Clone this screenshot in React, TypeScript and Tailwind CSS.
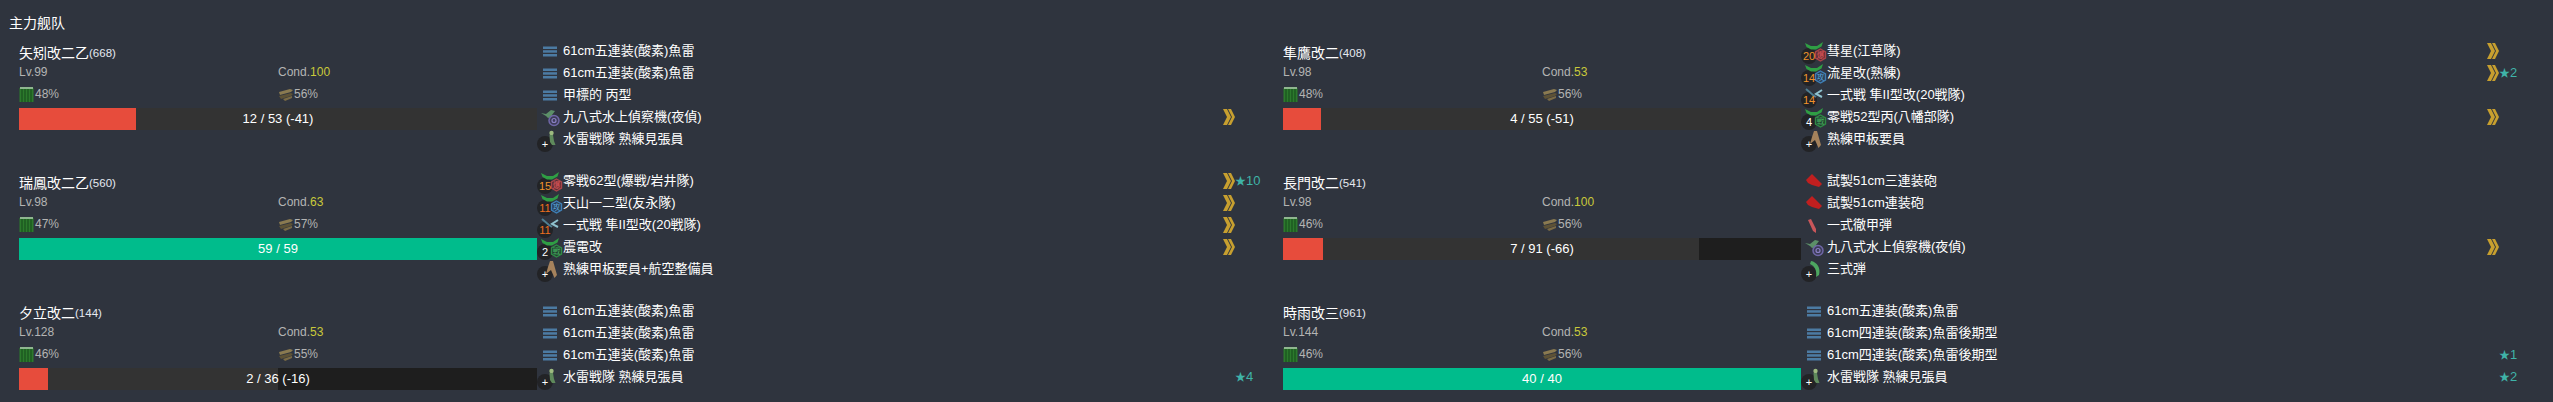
type Badge = 'red' | 'blue' | 'green';
type IconKind = 'torpedo' | 'seaplane' | 'lookout' | 'fighter' | 'jet' | 'crew' | 'gun' | 'shell' | 'sanshiki';

interface Equip {
  name: string;
  icon: IconKind;
  badge?: Badge;
  count?: string;
  chevron?: boolean;
  star?: number;
}

interface Ship {
  name: string;
  id: number;
  lv: number;
  cond: number;
  fuel: number;
  ammo: number;
  hp: number;
  maxHp: number;
  damage?: number;
  equips: Equip[];
}

const torpedo = (name: string, star?: number): Equip => ({ name, icon: 'torpedo', star });
const lookout: Equip = { name: '水雷戦隊 熟練見張員', icon: 'lookout', count: '+' };
const nightPlane: Equip = { name: '九八式水上偵察機(夜偵)', icon: 'seaplane', chevron: true };

const left: Ship[] = [
  {
    name: '矢矧改二乙',
    id: 668,
    lv: 99,
    cond: 100,
    fuel: 48,
    ammo: 56,
    hp: 12,
    maxHp: 53,
    damage: 41,
    equips: [torpedo('61cm五連装(酸素)魚雷'), torpedo('61cm五連装(酸素)魚雷'), torpedo('甲標的 丙型'), nightPlane, lookout],
  },
  {
    name: '瑞鳳改二乙',
    id: 560,
    lv: 98,
    cond: 63,
    fuel: 47,
    ammo: 57,
    hp: 59,
    maxHp: 59,
    equips: [
      { name: '零戦62型(爆戦/岩井隊)', icon: 'fighter', badge: 'red', count: '15', chevron: true, star: 10 },
      { name: '天山一二型(友永隊)', icon: 'fighter', badge: 'blue', count: '11', chevron: true },
      { name: '一式戦 隼II型改(20戦隊)', icon: 'jet', count: '11', chevron: true },
      { name: '震電改', icon: 'fighter', badge: 'green', count: '2', chevron: true },
      { name: '熟練甲板要員+航空整備員', icon: 'crew', count: '+' },
    ],
  },
  {
    name: '夕立改二',
    id: 144,
    lv: 128,
    cond: 53,
    fuel: 46,
    ammo: 55,
    hp: 2,
    maxHp: 36,
    damage: 16,
    equips: [
      torpedo('61cm五連装(酸素)魚雷'),
      torpedo('61cm五連装(酸素)魚雷'),
      torpedo('61cm五連装(酸素)魚雷'),
      { ...lookout, star: 4 },
    ],
  },
];

const right: Ship[] = [
  {
    name: '隼鷹改二',
    id: 408,
    lv: 98,
    cond: 53,
    fuel: 48,
    ammo: 56,
    hp: 4,
    maxHp: 55,
    damage: 51,
    equips: [
      { name: '彗星(江草隊)', icon: 'fighter', badge: 'red', count: '20', chevron: true },
      { name: '流星改(熟練)', icon: 'fighter', badge: 'blue', count: '14', chevron: true, star: 2 },
      { name: '一式戦 隼II型改(20戦隊)', icon: 'jet', count: '14' },
      { name: '零戦52型丙(八幡部隊)', icon: 'fighter', badge: 'green', count: '4', chevron: true },
      { name: '熟練甲板要員', icon: 'crew', count: '+' },
    ],
  },
  {
    name: '長門改二',
    id: 541,
    lv: 98,
    cond: 100,
    fuel: 46,
    ammo: 56,
    hp: 7,
    maxHp: 91,
    damage: 66,
    equips: [
      { name: '試製51cm三連装砲', icon: 'gun' },
      { name: '試製51cm連装砲', icon: 'gun' },
      { name: '一式徹甲弾', icon: 'shell' },
      nightPlane,
      { name: '三式弾', icon: 'sanshiki', count: '+' },
    ],
  },
  {
    name: '時雨改三',
    id: 961,
    lv: 144,
    cond: 53,
    fuel: 46,
    ammo: 56,
    hp: 40,
    maxHp: 40,
    equips: [
      torpedo('61cm五連装(酸素)魚雷'),
      torpedo('61cm四連装(酸素)魚雷後期型'),
      torpedo('61cm四連装(酸素)魚雷後期型', 1),
      { ...lookout, star: 2 },
    ],
  },
];

const badgeStyle: Record<Badge, { stroke: string; fill: string; text: string; label: string }> = {
  red: { stroke: '#a8444a', fill: '#5a2d34', text: '#e0575a', label: '爆' },
  blue: { stroke: '#3f7fb5', fill: '#2b4058', text: '#5aa5dc', label: '攻' },
  green: { stroke: '#2f8a45', fill: '#234030', text: '#46b060', label: '戦' },
};

const Hex = ({ badge }: { badge: Badge }) => {
  const s = badgeStyle[badge];
  return (
    <g transform="translate(14 9)">
      <path d="M5.5 0 L10.5 2.8 L10.5 9.2 L5.5 12 L0.5 9.2 L0.5 2.8 Z" fill={s.fill} stroke={s.stroke} strokeWidth="1.4" />
      <text x="5.5" y="9" textAnchor="middle" fontSize="7.5" fill={s.text} fontFamily="'Noto Sans CJK JP', sans-serif">
        {s.label}
      </text>
    </g>
  );
};

const EquipIcon = ({ kind, badge }: { kind: IconKind; badge?: Badge }) => {
  return (
    <svg width="26" height="26" viewBox="0 0 26 26" className="absolute top-0 left-0">
      {kind === 'torpedo' && (
        <g fill="#4c7ba3">
          <rect x="6" y="6.5" width="14" height="2.5" />
          <rect x="6" y="10.2" width="14" height="2.5" />
          <rect x="6" y="14" width="14" height="2.5" />
        </g>
      )}
      {kind === 'seaplane' && (
        <>
          <path d="M4 7 L9 8 L14 4 L18 5 L15 9 L16 11 L11 12 L9 10 Z" fill="#5c8f68" />
          <circle cx="17" cy="14.5" r="5" fill="#3d3c58" stroke="#6f66a6" strokeWidth="1.5" />
          <circle cx="17" cy="14.5" r="2" fill="none" stroke="#8a80c4" strokeWidth="1.2" />
        </>
      )}
      {kind === 'fighter' && (
        <>
          <path d="M4 3 L10 6 L16 6 L22 2 L20.5 6.5 L15 9.5 L10 9.5 L5.5 7 Z" fill="#2f9e44" />
          {badge && <Hex badge={badge} />}
        </>
      )}
      {kind === 'jet' && (
        <g fill="none" strokeWidth="2">
          <path d="M5 5 L12 11 L15 13" stroke="#4f7f92" />
          <path d="M21 6 L15 10 L21 13" stroke="#8fc2cf" />
        </g>
      )}
      {kind === 'lookout' && (
        <>
          <circle cx="14.5" cy="5" r="2.2" fill="#9dbb80" />
          <path d="M12.5 7 L16 7 L17 13 L18.5 17 L15 17 L13 14 Z" fill="#5f8a5c" />
        </>
      )}
      {kind === 'crew' && <path d="M13 3 L16 3 L20 17 L17.5 20 L14 12 L9 16 L11 9 Z" fill="#a5825c" />}
      {kind === 'gun' && <path d="M5 10 L11 4 L14 7 L21 14 L18 17 L11 15 L7 13 Z" fill="#c01f1f" />}
      {kind === 'shell' && <path d="M7 6 L10 5 L15 15 L15 19 L12 17 Z" fill="#c9565a" />}
      {kind === 'sanshiki' && <path d="M10 3 C16 4 20 10 18 17 L15 19 C16 13 14 8 9 6 Z" fill="#4da760" />}
    </svg>
  );
};

const Chevron = () => (
  <svg width="12" height="16" viewBox="0 0 12 16">
    <path d="M0 0 L4 0 L8 8 L4 16 L0 16 L4 8 Z M5 0 L8 0 L12 8 L8 16 L5 16 L9 8 Z" fill="#c79f2f" />
  </svg>
);

const countColor = (count: string) => {
  if (count === '+' || Number(count) < 10) return 'text-white';
  return count === '11' ? 'text-[#ee6f1e]' : 'text-[#f0932b]';
};

const EquipRow = ({ equip }: { equip: Equip }) => (
  <div className="flex h-[22px] items-center text-[13px] text-white">
    <div className="relative h-[22px] w-[26px] shrink-0">
      {equip.count && <span className="absolute top-[8px] left-0 h-4 w-4 rounded-full bg-[#222326]" />}
      <EquipIcon kind={equip.icon} badge={equip.badge} />
      {equip.count && (
        <span
          className={`absolute top-[8px] left-0 flex h-4 w-4 items-center justify-center text-[11px] ${countColor(equip.count)}`}
        >
          {equip.count}
        </span>
      )}
    </div>
    <span className="flex-1 truncate">{equip.name}</span>
    <span className="flex w-3 shrink-0 items-center">{equip.chevron && <Chevron />}</span>
    <span className="w-7 shrink-0 text-[#3fb3a8]">
      {equip.star && (
        <>
          <span className="text-[11px]">★</span>
          {equip.star}
        </>
      )}
    </span>
  </div>
);

const FuelIcon = () => (
  <svg width="15" height="16" viewBox="0 0 15 16" className="shrink-0">
    <rect x="0.5" y="2" width="14" height="14" fill="#2c7a2c" />
    <rect x="1" y="1" width="13" height="2" fill="#8fb78f" />
    <path d="M3 3 V16 M6 3 V16 M9 3 V16 M12 3 V16" stroke="#15481a" strokeWidth="1" />
  </svg>
);

const AmmoIcon = () => (
  <svg width="15" height="14" viewBox="0 0 15 14" className="shrink-0">
    <path d="M1 5 L12 2 L15 3 L13 5 L2 8 Z" fill="#8a7a50" />
    <path d="M1 9 L13 6 L15 7 L13 9 L3 12 Z" fill="#5d5236" />
    <path d="M5 12 L14 9 L14 11 L7 14 Z" fill="#7a6a44" />
  </svg>
);

const HpBar = ({ hp, maxHp, damage }: { hp: number; maxHp: number; damage?: number }) => {
  const full = hp === maxHp;
  return (
    <div className="relative mt-1 flex h-[22px] overflow-hidden bg-[#1e1e1e] text-[13px] text-white">
      <div className={full ? 'bg-[#00bc8c]' : 'bg-[#e74c3c]'} style={{ width: `${(hp / maxHp) * 100}%` }} />
      {damage && <div className="bg-[#333333]" style={{ width: `${(damage / maxHp) * 100}%` }} />}
      <span className="absolute inset-0 flex items-center justify-center">
        {hp} / {maxHp}
        {damage && ` (-${damage})`}
      </span>
    </div>
  );
};

const ShipRow = ({ ship }: { ship: Ship }) => (
  <div className="mb-5 flex h-[110px] px-[10px] last:mb-0 last:h-[90px]">
    <div className="w-[518px] shrink-0 pt-[2px]">
      <div className="flex h-[22px] items-center text-sm text-white">
        {ship.name}
        <span className="text-[11.5px] text-[#e4e8f0]">({ship.id})</span>
      </div>
      <div className="grid h-4 grid-cols-2 items-center text-xs text-[#b4b4b4]">
        <span>Lv.{ship.lv}</span>
        <span>
          Cond.<span className="text-[#c9c93a]">{ship.cond}</span>
        </span>
      </div>
      <div className="mt-1 grid h-5 grid-cols-2 items-center text-xs text-[#b4b4b4]">
        <span className="flex items-center gap-px">
          <FuelIcon />
          {ship.fuel}%
        </span>
        <span className="flex items-center gap-px">
          <AmmoIcon />
          {ship.ammo}%
        </span>
      </div>
      <HpBar hp={ship.hp} maxHp={ship.maxHp} damage={ship.damage} />
    </div>
    <div className="min-w-0 flex-1">
      {ship.equips.map((e, i) => (
        <EquipRow key={i} equip={e} />
      ))}
    </div>
  </div>
);

export default function App() {
  return (
    <div className="min-h-screen bg-[#2f343e] pl-[9px] font-['Liberation_Sans','Noto_Sans_CJK_JP',sans-serif]">
      <div className="flex h-10 items-center pt-[6px] text-sm text-white">主力舰队</div>
      <div className="grid grid-cols-[1264px_1264px]">
        <div>
          {left.map((s) => (
            <ShipRow key={s.id} ship={s} />
          ))}
        </div>
        <div>
          {right.map((s) => (
            <ShipRow key={s.id} ship={s} />
          ))}
        </div>
      </div>
    </div>
  );
}
